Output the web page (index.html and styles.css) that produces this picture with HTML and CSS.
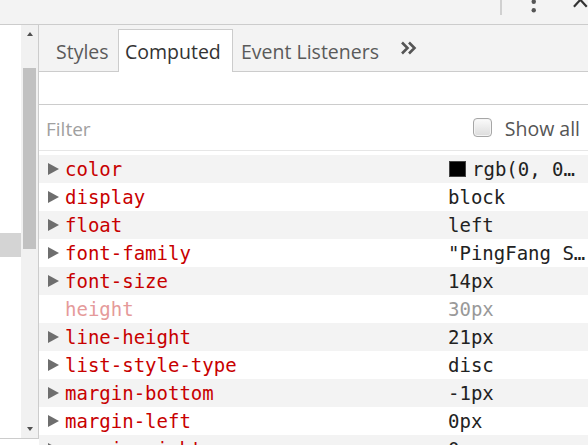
FILE: index.html
```html
<!DOCTYPE html>
<html>
<head>
<meta charset="utf-8">
<link rel="stylesheet" href="styles.css">
</head>
<body>
<div class="topbar">
  <div class="sep"></div>
  <svg class="kebab" width="6" height="14" viewBox="0 0 6 14"><circle cx="3" cy="1.2" r="2.4" fill="#555"/><circle cx="3" cy="10.5" r="2.4" fill="#555"/></svg>
  <svg class="close" width="16" height="12" viewBox="0 0 16 12"><path d="M1 10 L8 2.5 L15 10" stroke="#333" stroke-width="2.4" fill="none"/></svg>
</div>
<div class="main">
  <div class="left">
    <div class="tree">
      <div class="selrow"></div>
    </div>
    <div class="vscroll">
      <div class="arrow up"></div>
      <div class="thumb"></div>
      <div class="spacer"></div>
      <div class="arrow down"></div>
    </div>
  </div>
  <div class="right">
    <div class="tabs">
      <div class="tab t1">Styles</div>
      <div class="tab t2 active">Computed</div>
      <div class="tab t3">Event Listeners</div>
      <svg class="more" width="17" height="14" viewBox="0 0 17 14"><path d="M2 1.5 L7.5 7 L2 12.5 M9 1.5 L14.5 7 L9 12.5" stroke="#555" stroke-width="2.6" fill="none"/></svg>
    </div>
    <div class="blank"></div>
    <div class="filterbar">
      <span class="filter">Filter</span>
      <label class="showall"><span class="cb"></span>Show all</label>
    </div>
    <div class="props">
      <div class="row"><span class="tri"></span><span class="name">color</span><span class="val"><span class="swatch"></span>rgb(0, 0, 0)</span></div>
      <div class="row"><span class="tri"></span><span class="name">display</span><span class="val">block</span></div>
      <div class="row"><span class="tri"></span><span class="name">float</span><span class="val">left</span></div>
      <div class="row"><span class="tri"></span><span class="name">font-family</span><span class="val">"PingFang SC", sans-serif</span></div>
      <div class="row"><span class="tri"></span><span class="name">font-size</span><span class="val">14px</span></div>
      <div class="row inherited"><span class="tri none"></span><span class="name">height</span><span class="val">30px</span></div>
      <div class="row"><span class="tri"></span><span class="name">line-height</span><span class="val">21px</span></div>
      <div class="row"><span class="tri"></span><span class="name">list-style-type</span><span class="val">disc</span></div>
      <div class="row"><span class="tri"></span><span class="name">margin-bottom</span><span class="val">-1px</span></div>
      <div class="row"><span class="tri"></span><span class="name">margin-left</span><span class="val">0px</span></div>
      <div class="row"><span class="tri"></span><span class="name">margin-right</span><span class="val">0px</span></div>
    </div>
  </div>
</div>
</body>
</html>
```

FILE: styles.css
```css
html, body {
  margin: 0;
  padding: 0;
}
body {
  width: 588px;
  height: 445px;
  overflow: hidden;
  background: #fff;
  font-family: "Open Sans", "Noto Sans", sans-serif;
}
.topbar {
  height: 24px;
  background: #f3f3f3;
  border-bottom: 1px solid #cccccc;
  display: flex;
  align-items: flex-start;
  overflow: hidden;
}
.sep {
  width: 2px;
  height: 15px;
  background: #d0d0d0;
  margin-left: 500px;
}
.kebab {
  margin-left: 29px;
}
.close {
  margin-left: 37px;
  margin-top: -3px;
}
.main {
  display: flex;
  height: 420px;
}
.left {
  width: 38px;
  border-right: 1px solid #cccccc;
  display: flex;
  height: 413px;
  border-bottom: 1px solid #cccccc;
}
.tree {
  width: 21px;
  background: #fff;
  padding-top: 208px;
}
.selrow {
  height: 24px;
  background: #d4d4d4;
}
.vscroll {
  width: 17px;
  background: #f1f1f1;
  display: flex;
  flex-direction: column;
  align-items: center;
}
.arrow {
  width: 0;
  height: 0;
  border-left: 3.5px solid transparent;
  border-right: 3.5px solid transparent;
}
.arrow.up {
  border-bottom: 4px solid #505050;
  margin-top: 7px;
}
.arrow.down {
  border-top: 4px solid #505050;
  margin-bottom: 7px;
}
.thumb {
  width: 13px;
  height: 181px;
  background: #c1c1c1;
  margin-top: 32px;
}
.spacer {
  flex: 1;
}
.right {
  flex: 1;
  min-width: 0;
}
.tabs {
  height: 42px;
  padding-top: 4px;
  background: #f3f3f3;
  border-bottom: 1px solid #cccccc;
  display: flex;
  align-items: flex-start;
}
.tab {
  font-size: 19.5px;
  color: #5a5a5a;
  line-height: 27px;
  padding-top: 8px;
  height: 43px;
  box-sizing: border-box;
  border: 1px solid transparent;
  border-bottom: none;
  white-space: nowrap;
}
.t1 {
  width: 79px;
  padding-left: 16px;
}
.t2 {
  width: 115px;
  padding-left: 6px;
}
.t3 {
  width: 159px;
  padding-left: 7px;
}
.tab.active {
  background: #fff;
  border-color: #cccccc;
  color: #333;
}
.more {
  margin-left: 8px;
  margin-top: 12px;
}
.blank {
  height: 32px;
  border-bottom: 1px solid #cccccc;
}
.filterbar {
  height: 45px;
  border-bottom: 1px solid #e6e6e6;
  display: flex;
  align-items: center;
  padding-left: 7px;
  padding-right: 8px;
  margin-bottom: 4px;
}
.filter {
  font-size: 19px;
  color: #a0a0a0;
  flex: 1;
  padding-top: 2px;
}
.showall {
  font-size: 19.5px;
  color: #555;
  display: flex;
  align-items: center;
  padding-top: 2px;
}
.cb {
  width: 17px;
  height: 17px;
  border: 1px solid #a6a6a6;
  border-radius: 4px;
  background: linear-gradient(#fbfbfb, #dcdcdc);
  box-shadow: inset 0 0 0 1px #f4f4f4;
  margin-right: 13px;
  margin-top: -2px;
}
.props {
  font-family: "DejaVu Sans Mono", "Liberation Mono", monospace;
  font-size: 19px;
}
.row {
  height: 28px;
  display: flex;
  align-items: center;
  white-space: nowrap;
}
.row:nth-child(odd) {
  background: #f3f3f3;
}
.tri {
  width: 0;
  height: 0;
  border-top: 6.5px solid transparent;
  border-bottom: 6.5px solid transparent;
  border-left: 11px solid #6e6e6e;
  margin-left: 9px;
  margin-right: 6px;
  flex: none;
}
.tri.none {
  border-left-color: transparent;
}
.name {
  color: #c80000;
  width: 383px;
  flex: none;
}
.val {
  color: #222;
  overflow: hidden;
  text-overflow: ellipsis;
  flex: 1;
  min-width: 0;
  display: block;
  padding-right: 2px;
}
.inherited .name {
  color: #e59a9a;
}
.inherited .val {
  color: #999;
}
.swatch {
  display: inline-block;
  width: 15px;
  height: 14px;
  background: #000;
  border: 1px solid #444;
  vertical-align: -1px;
  margin-left: 1px;
  margin-right: 6px;
}
```
